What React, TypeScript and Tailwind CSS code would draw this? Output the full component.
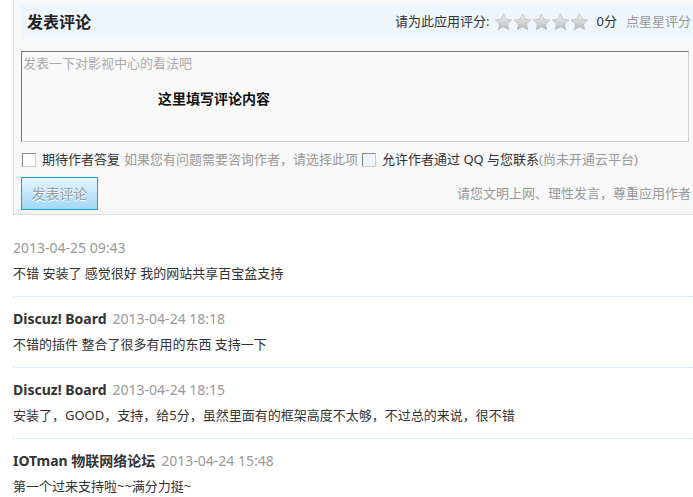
import React from 'react';

const comments = [
  { name: '', date: '2013-04-25 09:43', text: '不错 安装了 感觉很好 我的网站共享百宝盆支持' },
  { name: 'Discuz! Board', date: '2013-04-24 18:18', text: '不错的插件 整合了很多有用的东西 支持一下' },
  { name: 'Discuz! Board', date: '2013-04-24 18:15', text: '安装了，GOOD，支持，给5分，虽然里面有的框架高度不太够，不过总的来说，很不错' },
  { name: 'IOTman 物联网络论坛', date: '2013-04-24 15:48', text: '第一个过来支持啦~~满分力挺~' },
];

const Star = () => (
  <svg width="19" height="18" viewBox="0 0 24 23">
    <defs>
      <linearGradient id="sg" x1="0" y1="0" x2="0" y2="1">
        <stop offset="0" stopColor="#f2f2f2" />
        <stop offset="0.55" stopColor="#d4d4d4" />
        <stop offset="1" stopColor="#b9b9b9" />
      </linearGradient>
    </defs>
    <path
      d="M12 1.2l3.2 6.9 7.4.8-5.5 5 1.5 7.4L12 17.6l-6.6 3.7 1.5-7.4-5.5-5 7.4-.8z"
      fill="url(#sg)"
      stroke="#bdbdbd"
      strokeWidth="1"
      strokeLinejoin="round"
    />
  </svg>
);

const Box = ({ tint }: { tint?: boolean }) => (
  <span
    className={`inline-block w-[14px] h-[14px] border border-t-[#888] border-l-[#888] border-r-[#ccc] border-b-[#ccc] ${tint ? 'bg-[#eef5f9]' : 'bg-white'}`}
  />
);

export default function App() {
  return (
    <div className="w-full overflow-hidden bg-white font-['Noto_Sans','Noto_Sans_CJK_SC',sans-serif] text-[13px] text-[#333]">
      <div className="ml-[13px] w-[720px] border-l border-b border-[#dddddd] bg-[#f8f8f8] pl-[7px] pt-[5px] pb-[4px]">
        <div className="flex h-[34px] w-[673px] items-center justify-between bg-[#eef6fb] pl-[6px]">
          <h3 className="text-[16px] font-bold text-[#222]">发表评论</h3>
          <div className="flex items-center pr-[3px] text-[13px]">
            <span className="text-[#333]">请为此应用评分:</span>
            <span className="ml-[4px] flex">
              <Star />
              <Star />
              <Star />
              <Star />
              <Star />
            </span>
            <span className="ml-[8px] text-[#333]">0分</span>
            <span className="ml-[9px] text-[#999]">点星星评分</span>
          </div>
        </div>

        <div className="mt-[12px] h-[91px] w-[668px] border border-t-[#777] border-l-[#777] border-r-[#cfcfcf] border-b-[#cfcfcf] bg-[#f9f9f9] px-[1px]">
          <p className="leading-[22px] text-[#aaa]">发表一下对影视中心的看法吧</p>
          <p className="mt-[14px] pl-[135px] text-[14px] font-bold leading-[22px] text-[#111]">这里填写评论内容</p>
        </div>

        <div className="mt-[8px] flex h-[20px] items-center">
          <span className="ml-[1px] flex items-center">
            <Box />
          </span>
          <span className="ml-[6px] text-[#333]">期待作者答复</span>
          <span className="ml-[4px] text-[#999]">如果您有问题需要咨询作者，请选择此项</span>
          <span className="ml-[4px] flex items-center">
            <Box tint />
          </span>
          <span className="ml-[6px] text-[#333]">允许作者通过 QQ 与您联系</span>
          <span className="text-[#999]">(尚未开通云平台)</span>
        </div>

        <div className="mt-[7px] flex w-[670px] items-center justify-between">
          <button className="h-[33px] w-[77px] border border-[#1ba0d8] bg-gradient-to-b from-[#e6f5fd] to-[#a2d7f6] text-[14px] text-[#979fa5] [text-shadow:0_1px_0_#fff]">
            发表评论
          </button>
          <span className="mt-[1px] text-[#999]">请您文明上网、理性发言，尊重应用作者</span>
        </div>
      </div>

      <ul className="ml-[13px] mt-[11px]">
        {comments.map((c, i) => (
          <li key={i} className="border-b border-dotted border-[#c9e3f4] pb-[12px] pt-[10px]">
            <div className="flex h-[22px] items-center text-[14px]">
              {c.name && <span className="mr-[6px] font-bold text-[#333]">{c.name}</span>}
              <span className="text-[#999]">{c.date}</span>
            </div>
            <p className="mt-[4px] h-[22px] leading-[22px] text-[#333]">{c.text}</p>
          </li>
        ))}
      </ul>
    </div>
  );
}
